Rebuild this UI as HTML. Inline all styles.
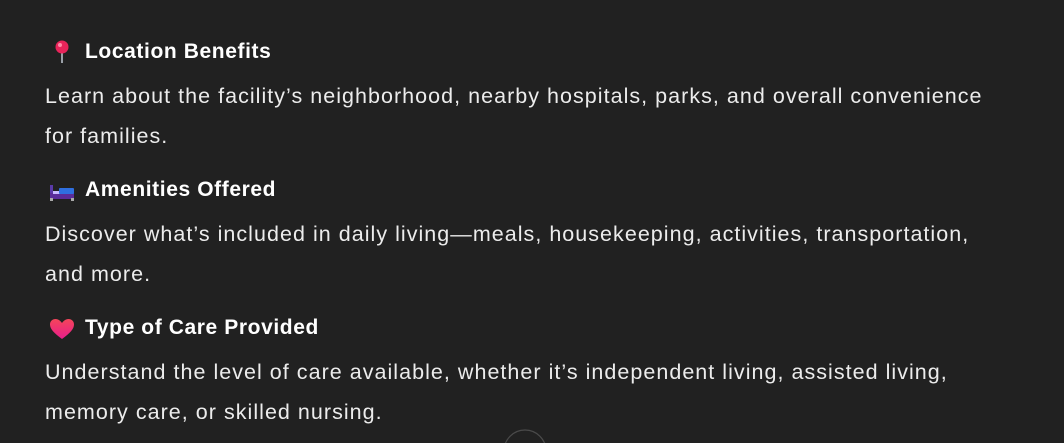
<!DOCTYPE html>
<html><head><meta charset="utf-8"><style>
html,body{margin:0;padding:0;background:#212121;width:1064px;height:443px;overflow:hidden}
body{font-family:"Liberation Sans","DejaVu Sans",sans-serif;color:#ececec;position:relative}
.h{position:absolute;left:85px;font-weight:bold;font-size:21px;line-height:28px;color:#fff;letter-spacing:0.6px;white-space:nowrap}
.p{position:absolute;left:45px;font-size:21.5px;line-height:40px;letter-spacing:1.03px;white-space:nowrap}
svg{position:absolute}
</style></head><body>
<svg style="left:51px;top:40px" width="22" height="24" viewBox="0 0 22 24">
<line x1="11" y1="10" x2="11" y2="23" stroke="#9aa0a8" stroke-width="2"/>
<circle cx="11" cy="7" r="6.5" fill="#e8245a"/><circle cx="9" cy="5" r="2" fill="#ff8aa8"/></svg>
<div class="h" style="top:38px">Location Benefits</div>
<div class="p" style="top:76px">Learn about the facility’s neighborhood, nearby hospitals, parks, and overall convenience<br>for families.</div>
<svg style="left:49px;top:184px" width="26" height="18" viewBox="0 0 26 18">
<rect x="1" y="1" width="3" height="15" fill="#5a3aa8"/><rect x="1" y="9" width="24" height="6" fill="#5a2c9a"/>
<rect x="4" y="7" width="7" height="3" fill="#c8b8ff"/><rect x="10" y="4" width="15" height="6" rx="1" fill="#2f6fe0"/>
<rect x="22" y="14" width="3" height="3" fill="#aaa"/><rect x="1" y="14" width="3" height="3" fill="#aaa"/></svg>
<div class="h" style="top:176px">Amenities Offered</div>
<div class="p" style="top:214px">Discover what’s included in daily living—meals, housekeeping, activities, transportation,<br>and more.</div>
<svg style="left:49px;top:318px" width="26" height="22" viewBox="0 0 26 22">
<defs><linearGradient id="g" x1="0" y1="0" x2="0" y2="1"><stop offset="0" stop-color="#f4455a"/><stop offset="1" stop-color="#e81e8c"/></linearGradient></defs>
<path d="M13 21 C5 15 1 11 1 6.5 C1 3 3.5 1 6.5 1 C9.5 1 11.5 3 13 5 C14.5 3 16.5 1 19.5 1 C22.5 1 25 3 25 6.5 C25 11 21 15 13 21Z" fill="url(#g)"/></svg>
<div class="h" style="top:314px">Type of Care Provided</div>
<div class="p" style="top:352px">Understand the level of care available, whether it’s independent living, assisted living,<br>memory care, or skilled nursing.</div>
<svg style="left:500px;top:428px" width="50" height="15" viewBox="0 0 50 15"><circle cx="25" cy="23" r="21" fill="none" stroke="#4a4a4a" stroke-width="1.2"/></svg>
</body></html>
